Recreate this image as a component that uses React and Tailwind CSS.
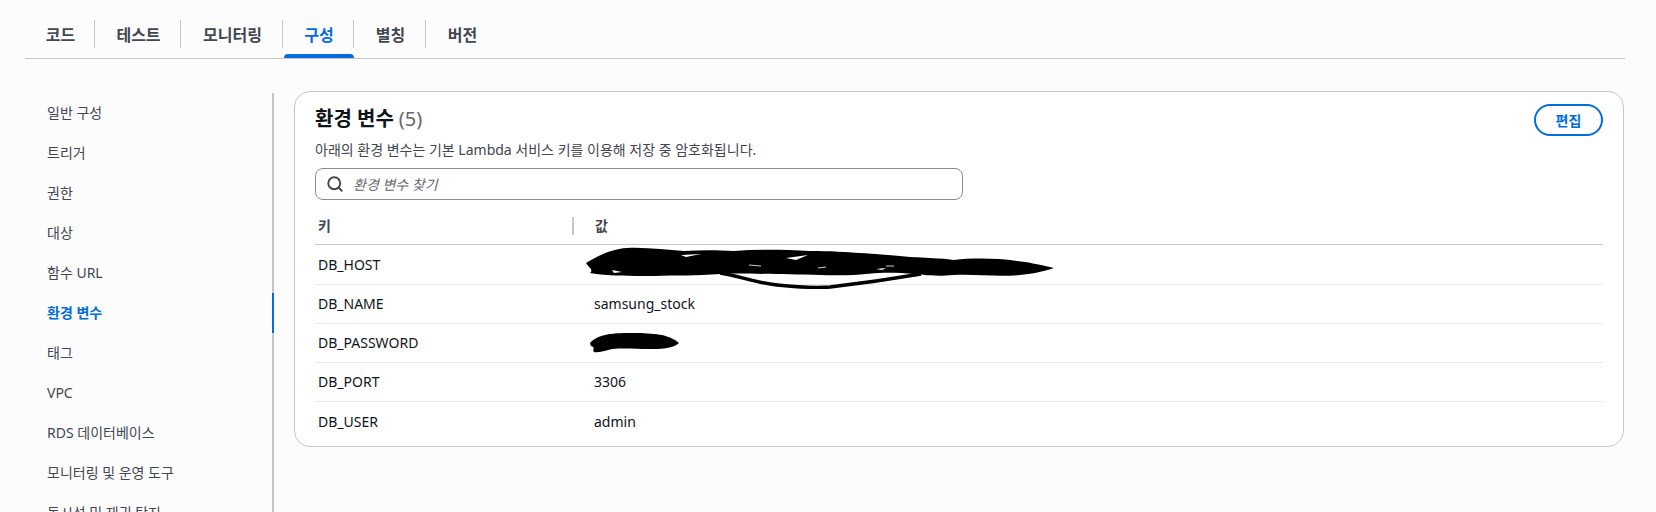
import React from "react";
import { Search } from "lucide-react";

const tabs = ["코드", "테스트", "모니터링", "구성", "별칭", "버전"];
const tabW = ["w-[70px]", "w-[86px]", "w-[102px]", "w-[71px]", "w-[72px]", "w-[71px]"];
const nav = ["일반 구성", "트리거", "권한", "대상", "함수 URL", "환경 변수", "태그", "VPC", "RDS 데이터베이스", "모니터링 및 운영 도구", "동시성 및 재귀 탐지"];

function Scribble1() {
  return (
    <svg width="472" height="42" viewBox="0 0 472 42" className="absolute left-[-8px] top-[-8px]" fill="none">
      <path d="M0 16 C12 9 25 2 41 1 C60 0 80 3 98 4 C115 3 130 3 148 4 C175 2 200 3 224 4 C245 4 260 5 274 6 C295 7 310 9 324 10 C340 11 355 11 368 13 C385 11 410 11 431 14 C442 15 450 17 468 21 C455 25 445 27 434 28 C410 30 390 27 368 28 C345 30 335 27 328 27 C300 24 280 27 268 28 C240 29 210 27 191 27 C170 27 150 26 134 27 C110 29 90 28 68 29 C45 29 20 29 4 26 C8 22 2 20 0 16Z" fill="#000" />
      <path d="M134 26 C150 28 170 36 191 38 C210 40 228 41 244 40 C270 37 300 33 335 27" stroke="#000" strokeWidth="3.5" />
      <path d="M200 11 L222 8 L210 13Z" fill="#fff" />
      <path d="M26 23 L36 25 L28 26Z" fill="#fff" />
      <path d="M95 8 L115 7 L100 10Z" fill="#fff" />
      <path d="M290 22 L300 21 L296 23Z" fill="#fff" />
      <path d="M163 18 L175 19 M232 21 L240 20 M300 19 L308 19" stroke="#fff" strokeWidth="0.8" />
    </svg>
  );
}

function Scribble2() {
  return (
    <svg width="92" height="22" viewBox="0 0 92 22" className="absolute left-[-4px] top-0" fill="none">
      <path d="M0 10 C4 5 12 2 20 1 C35 -1 60 0 72 2 C80 4 86 7 89 10 C84 14 78 16 60 16 C45 16 35 15 22 16 C14 18 8 20 4 19 C2 17 5 15 3 14 C1 13 0 12 0 10Z" fill="#000" />
    </svg>
  );
}

function Row({ k, v, first, last }) {
  return (
    <div className={`flex items-center ${first ? "h-10" : "h-[39px] pb-[1px]"} ${last ? "" : "border-b border-[#e8e9ec]"} text-[14px] text-[#0f141a]`}>
      <div className="w-[279px] pl-[3px] shrink-0">{k}</div>
      <div className="relative">{v}</div>
    </div>
  );
}

export default function App() {
  return (
    <div className="h-[512px] overflow-hidden bg-[#fcfcfd] pl-[25px] pr-[31px] text-[#0f141a] [font-family:'Noto_Sans','Noto_Sans_CJK_KR',sans-serif]">
      <div className="flex h-[59px] items-end border-b border-[#c6c6cd]">
        {tabs.map((t, i) => (
          <div key={t} className={`relative flex h-[38px] items-start ${tabW[i]}`}>
            <div className={`flex h-[28px] w-full items-center justify-center pl-[2px] pt-[1px] text-[16px] font-bold ${i === 3 ? "text-[#006ce0]" : "text-[#424650]"} ${i < 5 ? "border-r border-[#c6c6cd]" : ""}`}>
              {t}
            </div>
            {i === 3 && <div className="absolute bottom-0 left-[1px] right-0 h-1 rounded-t-sm bg-[#006ce0]" />}
          </div>
        ))}
      </div>

      <div className="flex">
        <nav className="mt-[34px] h-[500px] w-[249px] shrink-0 border-r-2 border-[#c6c6cd]">
          <ul>
            {nav.map((n, i) => (
              <li key={n} className={`relative flex h-10 items-center pb-[2px] pl-[22px] text-[14px] whitespace-nowrap ${i === 5 ? "font-bold text-[#006ce0]" : "text-[#424650]"}`}>
                {n}
                {i === 5 && <div className="absolute right-[-2px] top-0 h-10 w-[2px] bg-[#006ce0]" />}
              </li>
            ))}
          </ul>
        </nav>

        <section className="ml-[20px] mr-[1px] mt-[32px] h-[356px] flex-1 rounded-2xl border border-[#c6c6cd] bg-white pl-5 pr-5 pt-[11px]">
          <div className="flex items-start justify-between">
            <div>
              <h2 className="flex h-[32px] items-center text-[20px] font-bold leading-none">
                환경 변수 <span className="ml-[5px] text-[20px] font-normal text-[#656871]">(5)</span>
              </h2>
              <p className="mt-[5px] text-[14px] leading-[20px] text-[#424650]">아래의 환경 변수는 기본 Lambda 서비스 키를 이용해 저장 중 암호화됩니다.</p>
            </div>
            <button className="mt-[1px] h-[32px] w-[69px] rounded-full border-2 border-[#006ce0] text-[14px] font-bold text-[#006ce0]">편집</button>
          </div>

          <div className="mt-[8px] flex h-8 w-[648px] items-center rounded-lg border border-[#8c8c94] bg-white pl-[10px]">
            <Search size={18} strokeWidth={2.5} className="text-[#424650]" />
            <span className="ml-[9px] text-[14px] italic text-[#656871]">환경 변수 찾기</span>
          </div>

          <div className="mt-[17px] flex h-[28px] items-start border-b border-[#c6c6cd] text-[14px] font-bold text-[#424650]">
            <div className="w-[257px] pl-[3px] leading-[18px]">키</div>
            <div className="h-[18px] border-l-2 border-[#c6c6cd] pl-[21px] leading-[18px]">값</div>
          </div>

          <Row first k="DB_HOST" v={<span className="block h-5 w-[20px]"><Scribble1 /></span>} />
          <Row k="DB_NAME" v="samsung_stock" />
          <Row k="DB_PASSWORD" v={<span className="block h-5 w-[20px]"><Scribble2 /></span>} />
          <Row k="DB_PORT" v="3306" />
          <Row k="DB_USER" v="admin" last />
        </section>
      </div>
    </div>
  );
}
